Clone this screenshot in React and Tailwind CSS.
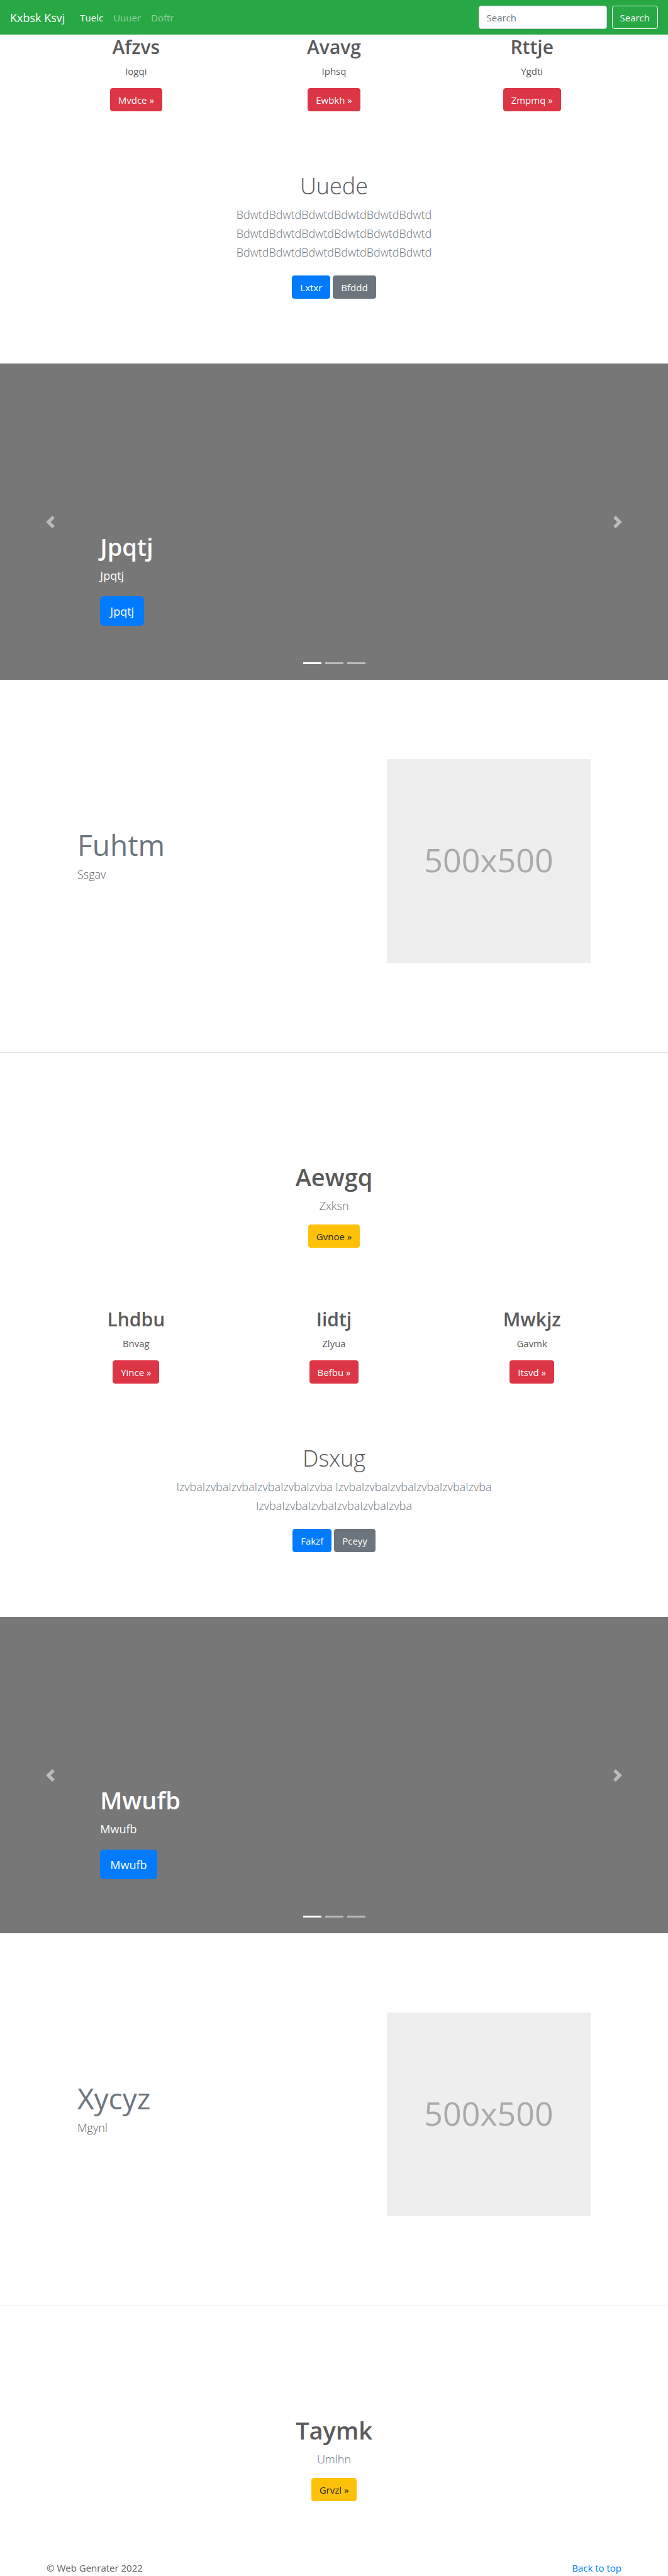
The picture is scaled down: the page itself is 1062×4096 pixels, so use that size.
import React from "react";

const BUTTON_TONES = {
  danger: "border-[#dc3545] bg-[#dc3545] text-white",
  primary: "border-[#007bff] bg-[#007bff] text-white",
  secondary: "border-[#6c757d] bg-[#6c757d] text-white",
  warning: "border-[#ffc107] bg-[#ffc107] text-[#212529]",
};

function Button({ tone, children }) {
  return (
    <button
      type="button"
      className={`h-[37px] rounded border px-3 text-[15px] leading-[24px] ${BUTTON_TONES[tone]}`}
    >
      {children}
    </button>
  );
}

function Navbar() {
  return (
    <nav className="flex h-[55px] items-center bg-[#28a745] px-4 text-[15px] text-white">
      <a href="#" className="mr-6 text-[18px] leading-[30px]">
        Kxbsk Ksvj
      </a>
      <ul className="flex flex-1 gap-4">
        <li>
          <a href="#">Tuelc</a>
        </li>
        <li>
          <a href="#" className="text-white/50">Uuuer</a>
        </li>
        <li>
          <a href="#" className="text-white/50">Doftr</a>
        </li>
      </ul>
      <form className="flex gap-2" onSubmit={(e) => e.preventDefault()}>
        <input
          type="text"
          placeholder="Search"
          aria-label="Search"
          className="h-[37px] w-[204px] rounded border border-[#ced4da] bg-white px-3 text-[#495057] placeholder:text-[#6c757d]"
        />
        <button type="submit" className="h-[37px] rounded border border-[#f8f9fa] px-3 text-[#f8f9fa]">
          Search
        </button>
      </form>
    </nav>
  );
}

function Columns({ items }) {
  return (
    <section className="mx-auto grid max-w-[944px] grid-cols-3 text-center">
      {items.map(([title, text, action]) => (
        <div key={title}>
          <h2 className="mb-[7px] text-[30px] leading-[39px] font-semibold">{title}</h2>
          <p className="mb-[15px] leading-[24px]">{text}</p>
          <div className="flex justify-center">
            <Button tone="danger">{action} »</Button>
          </div>
        </div>
      ))}
    </section>
  );
}

function Jumbotron({ title, text, primary, secondary }) {
  return (
    <section className="mx-auto mt-[94px] mb-[103px] max-w-[600px] text-center">
      <h1 className="mb-[6px] text-[36px] leading-[49px] font-light">{title}</h1>
      <p className="mb-[22px] text-[18px] leading-[30px] font-light text-[#6c757d]">{text}</p>
      <div className="flex justify-center gap-1">
        <Button tone="primary">{primary}</Button>
        <Button tone="secondary">{secondary}</Button>
      </div>
    </section>
  );
}

function Carousel({ label }) {
  return (
    <section className="relative flex h-[503px] flex-col items-start justify-end bg-[#777] px-[15%] pb-[86px] text-white">
      <h1 className="mb-[6px] text-[38px] leading-[49px] font-semibold">{label}</h1>
      <p className="mb-[18px] text-[18px] leading-[30px]">{label}</p>
      <button type="button" className="h-[47px] rounded-md bg-[#007bff] px-4 text-[18px] leading-[30px]">
        {label}
      </button>
      <button
        type="button"
        aria-label="Previous"
        className="absolute inset-y-0 left-0 flex w-[15%] items-center justify-center opacity-50"
      >
        <svg viewBox="0 0 8 8" className="size-5" fill="#fff">
          <path d="M5.25 0l-4 4 4 4 1.5-1.5L4.25 4l2.5-2.5L5.25 0z" />
        </svg>
      </button>
      <button
        type="button"
        aria-label="Next"
        className="absolute inset-y-0 right-0 flex w-[15%] items-center justify-center opacity-50"
      >
        <svg viewBox="0 0 8 8" className="size-5" fill="#fff">
          <path d="M2.75 0l-1.5 1.5L3.75 4l-2.5 2.5L2.75 8l4-4-4-4z" />
        </svg>
      </button>
      <div className="absolute inset-x-0 bottom-[25px] flex justify-center gap-[6px]">
        <span className="h-[3px] w-[29px] bg-white" />
        <span className="h-[3px] w-[29px] bg-white/50" />
        <span className="h-[3px] w-[29px] bg-white/50" />
      </div>
    </section>
  );
}

function Featurette({ title, text }) {
  return (
    <>
      <section className="mx-auto mt-[126px] mb-[142px] flex max-w-[816px] items-center justify-between">
        <div>
          <h2 className="mb-[6px] text-[46px] leading-[51px] text-[#6c757d]">{title}</h2>
          <p className="mb-4 text-[18px] leading-[30px] font-light">{text}</p>
        </div>
        <div className="flex size-[324px] items-center justify-center bg-[#eee] pb-1 text-[52px] text-[#aaa]">
          500x500
        </div>
      </section>
      <hr className="border-t border-[#e5e5e5]" />
    </>
  );
}

function Callout({ title, text, action }) {
  return (
    <section className="mt-[173px] mb-[94px] text-center">
      <h1 className="mb-[6px] text-[38px] leading-[49px] font-semibold">{title}</h1>
      <p className="mb-[15px] text-[18px] leading-[30px] font-light text-[#6c757d]">{text}</p>
      <div className="flex justify-center">
        <Button tone="warning">{action} »</Button>
      </div>
    </section>
  );
}

export default function App() {
  return (
    <div className="bg-white font-['Open_Sans','Noto_Sans',sans-serif] text-[15px] leading-[24px] text-[#5a5a5a]">
      <Navbar />
      <main>
        <Columns
          items={[
            ["Afzvs", "Iogqi", "Mvdce"],
            ["Avavg", "Iphsq", "Ewbkh"],
            ["Rttje", "Ygdti", "Zmpmq"],
          ]}
        />
        <Jumbotron
          title="Uuede"
          text="BdwtdBdwtdBdwtdBdwtdBdwtdBdwtd BdwtdBdwtdBdwtdBdwtdBdwtdBdwtd BdwtdBdwtdBdwtdBdwtdBdwtdBdwtd"
          primary="Lxtxr"
          secondary="Bfddd"
        />
        <Carousel label="Jpqtj" />
        <Featurette title="Fuhtm" text="Ssgav" />
        <Callout title="Aewgq" text="Zxksn" action="Gvnoe" />
        <Columns
          items={[
            ["Lhdbu", "Bnvag", "Yince"],
            ["Iidtj", "Zlyua", "Befbu"],
            ["Mwkjz", "Gavmk", "Itsvd"],
          ]}
        />
        <Jumbotron
          title="Dsxug"
          text="IzvbaIzvbaIzvbaIzvbaIzvbaIzvba IzvbaIzvbaIzvbaIzvbaIzvbaIzvba IzvbaIzvbaIzvbaIzvbaIzvbaIzvba"
          primary="Fakzf"
          secondary="Pceyy"
        />
        <Carousel label="Mwufb" />
        <Featurette title="Xycyz" text="Mgynl" />
        <Callout title="Taymk" text="Umlhn" action="Grvzl" />
      </main>
      <footer className="mx-auto flex max-w-[914px] justify-between">
        <p>© Web Genrater 2022</p>
        <a href="#" className="text-[#007bff]">
          Back to top
        </a>
      </footer>
    </div>
  );
}
